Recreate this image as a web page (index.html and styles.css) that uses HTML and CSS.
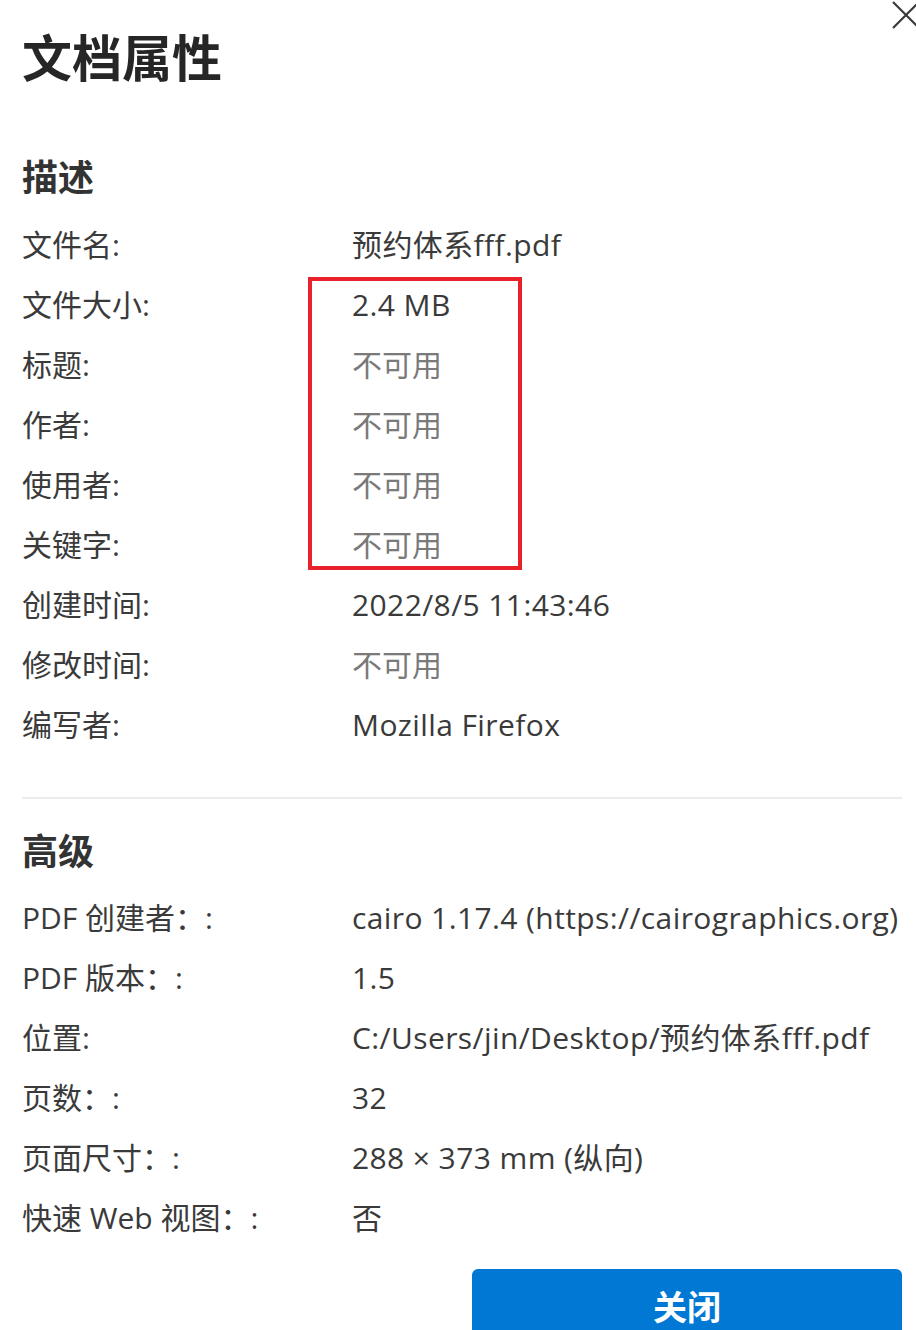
FILE: index.html
```html
<!DOCTYPE html>
<html lang="zh-CN">
<head>
<meta charset="utf-8">
<title>文档属性</title>
<link rel="stylesheet" href="styles.css">
</head>
<body>
<div class="dialog">
  <button class="close-x" aria-label="关闭">
    <svg viewBox="0 0 30 30" width="30" height="30"><path d="M2 1 L28 27 M28 1 L2 27" stroke="#3a3a3a" stroke-width="2.2" fill="none"/></svg>
  </button>
  <h1 class="title">文档属性</h1>

  <h2 class="section">描述</h2>
  <dl class="props">
    <dt>文件名:</dt><dd>预约体系fff.pdf</dd>
    <dt>文件大小:</dt><dd>2.4 MB</dd>
    <dt>标题:</dt><dd class="na">不可用</dd>
    <dt>作者:</dt><dd class="na">不可用</dd>
    <dt>使用者:</dt><dd class="na">不可用</dd>
    <dt>关键字:</dt><dd class="na">不可用</dd>
    <dt>创建时间:</dt><dd>2022/8/5 11:43:46</dd>
    <dt>修改时间:</dt><dd class="na">不可用</dd>
    <dt>编写者:</dt><dd>Mozilla Firefox</dd>
  </dl>

  <hr class="divider">

  <h2 class="section adv">高级</h2>
  <dl class="props">
    <dt>PDF 创建者：:</dt><dd>cairo 1.17.4 (https://cairographics.org)</dd>
    <dt>PDF 版本：:</dt><dd>1.5</dd>
    <dt>位置:</dt><dd>C:/Users/jin/Desktop/预约体系fff.pdf</dd>
    <dt>页数：:</dt><dd>32</dd>
    <dt>页面尺寸：:</dt><dd>288 × 373 mm (纵向)</dd>
    <dt>快速 Web 视图：:</dt><dd>否</dd>
  </dl>

  <div class="footer">
    <button class="btn-primary">关闭</button>
  </div>

  <div class="highlight"></div>
</div>
</body>
</html>
```

FILE: styles.css
```css
html, body {
  margin: 0;
  padding: 0;
  background: #ffffff;
}
body {
  width: 916px;
  height: 1330px;
  overflow: hidden;
  font-family: "Open Sans", "Noto Sans CJK SC", sans-serif;
  color: #333333;
}
.dialog {
  position: relative;
  padding: 25px 14px 0 22px;
}
.close-x {
  position: absolute;
  top: 1px;
  right: -5px;
  width: 30px;
  height: 30px;
  padding: 0;
  border: 0;
  background: transparent;
}
.close-x svg { display: block; }
.title {
  margin: 0;
  font-family: "Noto Sans CJK SC", sans-serif;
  font-size: 50px;
  line-height: 60px;
  font-weight: 700;
  color: #262626;
}
.section {
  margin: 65px 0 15px;
  font-family: "Noto Sans CJK SC", sans-serif;
  font-size: 36px;
  line-height: 50px;
  font-weight: 700;
  color: #333333;
}
.section.adv {
  margin-top: 25px;
  margin-bottom: 14px;
}
.props {
  display: grid;
  grid-template-columns: 330px 1fr;
  grid-auto-rows: 60px;
  margin: 0;
  font-size: 30px;
  line-height: 60px;
}
.props dt, .props dd {
  margin: 0;
  white-space: nowrap;
}
.props dt { color: #3a3a3a; }
.props dd { color: #3a3a3a; letter-spacing: 0.4px; }
.props dd.na { color: #7a7a7a; letter-spacing: 0; }
.divider {
  margin: 42px 0 0;
  border: 0;
  height: 2px;
  background: #ececec;
}
.footer {
  display: flex;
  justify-content: flex-end;
  margin-top: 21px;
}
.btn-primary {
  width: 430px;
  height: 80px;
  border: 0;
  border-radius: 6px;
  background: #0078d4;
  color: #ffffff;
  font-family: "Noto Sans CJK SC", sans-serif;
  font-size: 34px;
  font-weight: 700;
  padding: 0;
  display: flex;
  align-items: flex-start;
  justify-content: center;
  line-height: 74px;
}
.highlight {
  position: absolute;
  left: 308px;
  top: 277px;
  width: 206px;
  height: 285px;
  border: 4px solid #e8212b;
}
```
